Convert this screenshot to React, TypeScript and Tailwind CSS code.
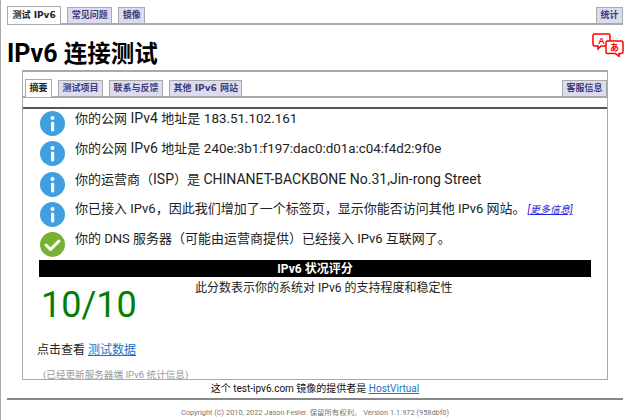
import React from "react";

const CJK = `font-['Roboto','Noto_Sans_CJK_SC',sans-serif]`;

function Info() {
  return (
    <svg width="25" height="25" viewBox="0 0 25 25" className="shrink-0">
      <circle cx="12.5" cy="12.5" r="12.5" fill="#3f9fe0" />
      <circle cx="12.5" cy="7" r="2" fill="#fff" />
      <rect x="11" y="10.5" width="3.2" height="10" rx="1.6" fill="#fff" />
    </svg>
  );
}

function Check() {
  return (
    <svg width="25" height="25" viewBox="0 0 25 25" className="shrink-0">
      <circle cx="12.5" cy="12.5" r="12.5" fill="#75b133" />
      <path d="M6 13 L10.5 17.5 L19 9" fill="none" stroke="#fff" strokeWidth="3" strokeLinecap="round" strokeLinejoin="round" />
    </svg>
  );
}

function Translate() {
  return (
    <svg width="32" height="24" viewBox="0 0 32 24" className="shrink-0">
      <path d="M2.5 1 H16.5 Q18 1 18 2.5 V11.5 Q18 13 16.5 13 H9 L6 16 L6 13 H2.5 Q1 13 1 11.5 V2.5 Q1 1 2.5 1 Z" fill="#fff" stroke="#f00" strokeWidth="1.5" />
      <path d="M15.5 8 H29.5 Q31 8 31 9.5 V19 Q31 20.5 29.5 20.5 H27 L27 23.5 L23.5 20.5 H15.5 Q14 20.5 14 19 V9.5 Q14 8 15.5 8 Z" fill="#fff" stroke="#f00" strokeWidth="1.5" />
      <text x="9.5" y="10.5" textAnchor="middle" fontSize="9" fontWeight="700" fill="#f00" fontFamily="Liberation Sans">A</text>
      <text x="22.5" y="18" textAnchor="middle" fontSize="9" fontWeight="700" fill="#f00" fontFamily="Noto Sans CJK JP">あ</text>
    </svg>
  );
}

function Tab({ children, active }: { children: React.ReactNode; active?: boolean }) {
  const base = "font-['DejaVu_Sans','Noto_Sans_CJK_SC',sans-serif] text-[9px] font-bold leading-none flex items-center justify-center border border-b-0 border-[#aaaaaa] px-[3.5px] ";
  if (active) {
    return <div className={base + "bg-white text-[#222222] h-[18px] -mb-[1px] relative z-10"}>{children}</div>;
  }
  return <div className={base + "bg-[#dcdcf0] text-[#3c3c78] h-[16px]"}>{children}</div>;
}

function Row({ icon, children }: { icon: React.ReactNode; children: React.ReactNode }) {
  return (
    <div className="h-[30.3px] flex items-start gap-[10px] pl-[17px]">
      {icon}
      <div className="text-[13px] leading-[18px] text-[#222222] whitespace-nowrap -mt-[2px]">{children}</div>
    </div>
  );
}

function L({ children }: { children: React.ReactNode }) {
  return <span className="text-[14px]">{children}</span>;
}

function N({ children }: { children: React.ReactNode }) {
  return <span className="text-[13.4px]">{children}</span>;
}

export default function App() {
  return (
    <div className={`w-[630px] h-[420px] overflow-hidden bg-white relative ${CJK}`}>
      <div className="absolute left-0 top-0 bottom-0 w-[1px] bg-[#aaaaaa]" />
      <div className="pl-[7px] pr-[7px] pt-[7px]">
        <div className="flex items-end justify-between border-b-[2px] border-[#aaaaaa] h-[18px]">
          <div className="flex items-end gap-[6px]">
            <Tab active>
              <span className="px-[1px]">测试 IPv6</span>
            </Tab>
            <Tab>常见问题</Tab>
            <Tab>镜像</Tab>
          </div>
          <Tab>统计</Tab>
        </div>
        <div className="h-[45px] flex items-start justify-between relative">
          <h1 className="text-[23.5px] leading-[32px] font-bold text-black mt-[13px]">
            <span className="text-[25px]">IPv6 </span>连接测试
          </h1>
          <div className="mt-[8px] -mr-[1px]">
            <Translate />
          </div>
        </div>
        <div className="ml-[15px] w-[586px] h-[310px] border border-[#aaaaaa] border-t-[2px] bg-white">
          <div className="flex items-end justify-between border-b-[2px] border-[#aaaaaa] h-[26px] pl-[2px]">
            <div className="flex items-end gap-[6px]">
              <Tab active>摘要</Tab>
              <Tab>测试项目</Tab>
              <Tab>联系与反馈</Tab>
              <Tab>其他 IPv6 网站</Tab>
            </div>
            <Tab>客服信息</Tab>
          </div>
          <div className="mt-[9px] border-t-[2px] border-[#555555]">
            <div className="pt-[2px]">
              <Row icon={<Info />}>
                你的公网<L> IPv4 </L>地址是<L> </L><N>183.51.102.161</N>
              </Row>
              <Row icon={<Info />}>
                你的公网<L> IPv6 </L>地址是<L> </L><N>240e:3b1:f197:dac0:d01a:c04:f4d2:9f0e</N>
              </Row>
              <Row icon={<Info />}>
                你的运营商（<L>ISP</L>）是<L> CHINANET-BACKBONE No.31,Jin-rong Street</L>
              </Row>
              <Row icon={<Info />}>
                你已接入 IPv6，因此我们增加了一个标签页，显示你能否访问其他 IPv6 网站。
                <a className="ml-[2px] text-[10px] italic text-[#2222dd] underline">[更多信息]</a>
              </Row>
              <Row icon={<Check />}>你的 DNS 服务器（可能由运营商提供）已经接入 IPv6 互联网了。</Row>
            </div>
            <div className="ml-[16px] mr-[16px] mt-[-2px] h-[17px] bg-black text-white text-[12px] font-bold flex items-center justify-center leading-none">IPv6 状况评分</div>
            <div className="ml-[16px] mr-[16px] flex items-start h-[64px] pt-[2px]">
              <div className="text-[36px] leading-[52px] text-[#008000] w-[156px] pl-[2px]">10/10</div>
              <div className="text-[12px] leading-[18px] text-[#222222] whitespace-nowrap">此分数表示你的系统对 IPv6 的支持程度和稳定性</div>
            </div>
            <div className="pl-[14px] text-[12px] leading-[18px] text-[#222222]">
              点击查看 <a className="text-[#1a73c8] underline">测试数据</a>
            </div>
            <div className="pl-[20px] mt-[9px] text-[9.6px] leading-[14px] text-[#999999]">(已经更新服务器端 IPv6 统计信息)</div>
          </div>
        </div>
        <div className="text-center text-[10px] leading-[18px] text-[#111111] h-[18px]">
          这个 test-ipv6.com 镜像的提供者是 <a className="text-[#1a73c8] underline">HostVirtual</a>
        </div>
        <div className="border-t-[2px] border-[#888888] pt-[7px] text-center text-[7.4px] leading-[12px] text-[#777777]">
          Copyright (C) 2010, 2022 Jason Fesler. 保留所有权利。 Version 1.1.972 (958dbf0)
        </div>
      </div>
    </div>
  );
}
